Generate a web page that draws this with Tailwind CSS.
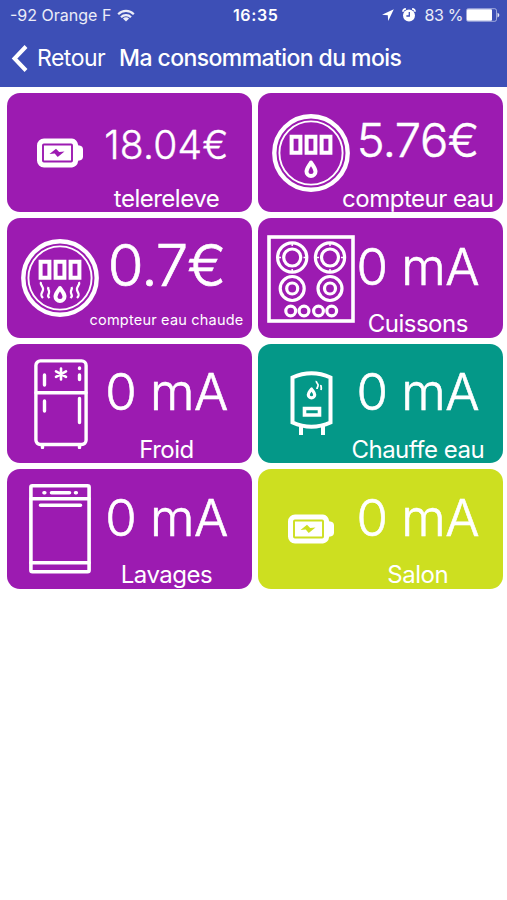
<!DOCTYPE html>
<html lang="fr">
<head>
  <meta charset="UTF-8">
  <meta name="viewport" content="width=device-width, initial-scale=1.0">
  <script src="https://cdn.jsdelivr.net/npm/@tailwindcss/browser@4"></script>
  <title>Ma consommation du mois</title>
</head>
<body class="bg-white text-white font-['Inter',sans-serif]">
  <header class="h-[87px] bg-[#3d4fb6]">
    <div class="flex h-[30px] items-center pl-[10px] pr-[7px] text-[16px] leading-none">
      <div class="flex w-[223px] items-center gap-[6px] text-white/90">
        <span class="whitespace-nowrap">-92 Orange F</span>
        <svg class="h-[13px] w-[18px]" viewBox="0 0 18 13" fill="none" stroke="currentColor" stroke-width="2.2">
          <path d="M1.2 5.2a11 11 0 0 1 15.6 0M4 8.2a7 7 0 0 1 10 0"/>
          <path d="M9 12.6L5.9 9.6a4.4 4.4 0 0 1 6.2 0z" fill="currentColor" stroke="none"/>
        </svg>
      </div>
      <span class="font-semibold tracking-[0.6px]">16:35</span>
      <div class="ml-auto flex items-center">
        <svg class="mr-[8px] h-[12px] w-[12px]" viewBox="0 0 12 12" fill="currentColor"><path d="M11.8 0.2L0 5.8l5.8 0.5 0.4 5.7z"/></svg>
        <svg class="mr-[9px] h-[14px] w-[14px]" viewBox="0 0 14 14">
          <circle cx="7" cy="7.6" r="6" fill="currentColor"/>
          <path d="M0.9 3.7a3 3 0 0 1 3-2.8M13.1 3.7a3 3 0 0 0-3-2.8" fill="none" stroke="currentColor" stroke-width="1.6"/>
          <path d="M7.3 4v4H4.4" fill="none" stroke="#3d4fb6" stroke-width="1.3"/>
        </svg>
        <span class="mr-[3px] whitespace-nowrap tracking-[-0.4px] text-white/90">83 %</span>
        <svg class="h-[14px] w-[34px]" viewBox="0 0 34 14">
          <rect x="0.5" y="0.7" width="30" height="12.6" rx="1.8" fill="none" stroke="#fff" stroke-opacity=".5"/>
          <rect x="1" y="1.2" width="25" height="11.6" rx="1" fill="#fff"/>
          <path d="M31.5 4.8c2.4 0.8 2.4 3.8 0 4.6z" fill="#fff" fill-opacity=".85"/>
        </svg>
      </div>
    </div>
    <nav class="flex h-[56px] items-center pl-[11px] text-[23px] leading-none">
      <svg class="mr-[9px] h-[27px] w-[17px]" viewBox="0 0 17 27" fill="none" stroke="currentColor" stroke-width="4"><path d="M15 1.5L3.5 13.5 15 25.5"/></svg>
      <a href="#" class="w-[82px] whitespace-nowrap tracking-[-0.5px]">Retour</a>
      <h1 class="whitespace-nowrap font-medium tracking-[-0.58px]">Ma consommation du mois</h1>
    </nav>
  </header>

  <svg class="hidden">
    <symbol id="battery" viewBox="0 0 48 30">
      <path d="M8 0.5h28a6.5 6.5 0 0 1 6 6l0.5 1h1a4 4 0 0 1 3.500 4v7a4 4 0 0 1-3.500 4h-1l-0.500 1a6.500 6.500 0 0 1-6 6H8A7 7 0 0 1 1 22.500v-15A7 7 0 0 1 8 0.500z" fill="#fff"/>
      <rect x="7" y="6.500" width="29" height="17" rx="0.800" fill="none" stroke="currentColor" stroke-width="1.900"/>
      <path d="M13.500 16l6.500-5.200 3.200 3.200 5.300-0.600-6.800 5.600-3-3.600z" fill="currentColor"/>
    </symbol>
    <symbol id="meter" viewBox="0 0 78 78">
      <g fill="none" stroke="#fff">
        <circle cx="39" cy="39" r="36.700" stroke-width="4.400"/>
        <circle cx="39" cy="39" r="31.600" stroke-width="1.900"/>
        <path d="M19.600 22.700h8.800v16h-8.800zM34.600 22.700h8.800v16h-8.800zM49.600 22.700h8.800v16h-8.800z" stroke-width="4"/>
      </g>
    </symbol>
  </svg>

  <main class="grid grid-cols-2 gap-x-[6px] gap-y-[6px] pt-[6px] pr-[4px] pl-[6.500px]">
    <section class="flex h-[119.400px] items-center rounded-[13px] bg-[#9c1bb1] text-white">
      <div class="flex w-[107px] shrink-0 justify-center">
        <svg class="h-[30px] w-[48px] text-[#9c1bb1]"><use href="#battery"/></svg>
      </div>
      <div class="flex h-full w-[106px] flex-col items-center whitespace-nowrap font-light">
        <div class="flex h-[93px] shrink-0 items-center pt-[9px] text-[39px] leading-none tracking-[0.2px] [-webkit-text-stroke:0.4px_white]"><span>18.04€</span></div>
        <div class="text-[24px] leading-[25px] font-normal tracking-[-0.5px]"><span>telereleve</span></div>
      </div>
    </section>

    <section class="flex h-[119.400px] items-center rounded-[13px] bg-[#9c1bb1] text-white">
      <div class="flex w-[107px] shrink-0 justify-center">
        <svg class="h-[78px] w-[78px]" viewBox="0 0 78 78">
          <use href="#meter"/>
          <path d="M39 48.500c-2 3.300-4.500 6-4.500 9a4.500 4.500 0 0 0 9 0c0-3-2.500-5.700-4.500-9z" fill="none" stroke="#fff" stroke-width="4" stroke-linejoin="round"/>
        </svg>
      </div>
      <div class="flex h-full w-[106px] flex-col items-center whitespace-nowrap font-light">
        <div class="flex h-[93px] shrink-0 items-center text-[47px] leading-none tracking-[-0.5px] [-webkit-text-stroke:0.5px_white]"><span>5.76€</span></div>
        <div class="text-[24px] leading-[25px] font-normal tracking-[-0.5px]"><span>compteur eau</span></div>
      </div>
    </section>

    <section class="flex h-[119.400px] items-center rounded-[13px] bg-[#9c1bb1] text-white">
      <div class="flex w-[107px] shrink-0 justify-center">
        <svg class="h-[78px] w-[78px]" viewBox="0 0 78 78">
          <use href="#meter"/>
          <g fill="none" stroke="#fff">
            <path d="M39 49c-2 3.300-4.500 5.500-4.500 8.500a4.500 4.500 0 0 0 9 0c0-3-2.500-5.200-4.500-8.500z" stroke-width="4" stroke-linejoin="round"/>
            <path d="M20 43c-1.500 3 3 4.500 2 8s-3.500 4.500 0 8M27.500 48c-1.500 2.500 1.500 3 0.500 6s-1.500 3 0.500 5M50.500 48c1.500 2.500-1.500 3-0.500 6s1.500 3-0.500 5M58 43c1.500 3-3 4.500-2 8s3.500 4.500 0 8" stroke-width="2.300"/>
          </g>
        </svg>
      </div>
      <div class="flex h-full w-[106px] flex-col items-center whitespace-nowrap font-light">
        <div class="flex h-[93px] shrink-0 items-center text-[58px] leading-none tracking-[-1px] [-webkit-text-stroke:0.7px_white]"><span>0.7€</span></div>
        <div class="text-[14.500px] leading-[18px] font-normal tracking-[0.2px]"><span>compteur eau chaude</span></div>
      </div>
    </section>

    <section class="flex h-[119.400px] items-center rounded-[13px] bg-[#9c1bb1] text-white">
      <div class="flex w-[107px] shrink-0 justify-center pt-[1px]">
        <svg class="h-[88px] w-[88px]" viewBox="0 0 88 88" fill="none" stroke="#fff">
          <rect x="2" y="2" width="84" height="84" stroke-width="3.600"/>
          <g stroke-width="3.200">
            <circle cx="25.200" cy="22.500" r="14.600"/><circle cx="25.200" cy="22.500" r="8.500"/>
            <circle cx="63" cy="22.500" r="14.600"/><circle cx="63" cy="22.500" r="8.500"/>
            <circle cx="25.200" cy="53.500" r="12"/><circle cx="25.200" cy="53.500" r="5.500"/>
            <circle cx="63" cy="53.500" r="12"/><circle cx="63" cy="53.500" r="5.500"/>
            <circle cx="23.700" cy="76" r="4.900"/><circle cx="37" cy="76" r="4.900"/>
            <circle cx="51.500" cy="76" r="4.900"/><circle cx="64.700" cy="76" r="4.900"/>
          </g>
          <path d="M25.200 9v2M25.200 34v3M12 22.500h2M36.500 22.500h3M63 9v2M63 34v3M50 22.500h2M74 22.500h3" stroke-width="1.500"/>
        </svg>
      </div>
      <div class="flex h-full w-[106px] flex-col items-center whitespace-nowrap font-light">
        <div class="flex h-[93px] shrink-0 items-center pt-[3px] text-[51px] leading-none tracking-[-0.6px] [-webkit-text-stroke:0.6px_white]"><span>0 mA</span></div>
        <div class="text-[24px] leading-[25px] font-normal tracking-[-0.5px]"><span>Cuissons</span></div>
      </div>
    </section>

    <section class="flex h-[119.400px] items-center rounded-[13px] bg-[#9c1bb1] text-white">
      <div class="flex w-[107px] shrink-0 justify-center pt-[1px] pl-[1px]">
        <svg class="h-[90px] w-[54px]" viewBox="0 0 54 90" fill="none" stroke="#fff" stroke-width="3.400" stroke-linecap="round">
          <rect x="1.900" y="1.900" width="50.200" height="83.600" rx="4.500"/>
          <path d="M2 33.800h50M8.500 86v2.500M45.500 86v2.500M10.500 16v10M10.500 42v10M45.500 16v4.500M45.500 9v0.500M45.500 39.500v24"/>
          <path d="M27 9.500v11M22 12.300l10 5.600M32 12.300l-10 5.600" stroke-width="2.600"/>
        </svg>
      </div>
      <div class="flex h-full w-[106px] flex-col items-center whitespace-nowrap font-light">
        <div class="flex h-[93px] shrink-0 items-center pt-[3px] text-[51px] leading-none tracking-[-0.6px] [-webkit-text-stroke:0.6px_white]"><span>0 mA</span></div>
        <div class="text-[24px] leading-[25px] font-normal tracking-[-0.5px]"><span>Froid</span></div>
      </div>
    </section>

    <section class="flex h-[119.400px] items-center rounded-[13px] bg-[#049888] text-white">
      <div class="flex w-[107px] shrink-0 justify-center pt-[1px] pl-[1px]">
        <svg class="h-[65px] w-[43px]" viewBox="0 0 43 65" fill="none" stroke="#fff">
          <path d="M2.500 6.500Q21.500-2 40.500 6.500V51.500Q21.500 60 2.500 51.500z" stroke-width="4"/>
          <path d="M11 55v9M33 55v9" stroke-width="4"/>
          <path d="M14.500 37.500h15v6.500h-15z" stroke-width="3.600"/>
          <path d="M21.500 18c-1.200 2-3.200 3.700-3.200 5.700a3.200 3.200 0 0 0 6.400 0c0-2-2-3.700-3.200-5.700z" stroke-width="3.200" stroke-linejoin="round"/>
          <path d="M26.500 10c-1 2 2.500 2.500 1.500 5s-1 2-1 3M31 14c-0.500 1.500 1 2 0 5" stroke-width="1.800"/>
        </svg>
      </div>
      <div class="flex h-full w-[106px] flex-col items-center whitespace-nowrap font-light">
        <div class="flex h-[93px] shrink-0 items-center pt-[3px] text-[51px] leading-none tracking-[-0.6px] [-webkit-text-stroke:0.6px_white]"><span>0 mA</span></div>
        <div class="text-[24px] leading-[25px] font-normal tracking-[-0.5px]"><span>Chauffe eau</span></div>
      </div>
    </section>

    <section class="flex h-[119.400px] items-center rounded-[13px] bg-[#9c1bb1] text-white">
      <div class="flex w-[107px] shrink-0 justify-center">
        <svg class="h-[90px] w-[62px]" viewBox="0 0 62 90" fill="none" stroke="#fff" stroke-width="3.600" stroke-linecap="round">
          <rect x="1.900" y="1.800" width="58.200" height="86" rx="1.500"/>
          <path d="M2 14.800h58M2 78.700h58M11.500 21.300h40M22.500 8.700h18M15 8.700h0.800M46.500 8.700h0.800"/>
        </svg>
      </div>
      <div class="flex h-full w-[106px] flex-col items-center whitespace-nowrap font-light">
        <div class="flex h-[93px] shrink-0 items-center pt-[3px] text-[51px] leading-none tracking-[-0.6px] [-webkit-text-stroke:0.6px_white]"><span>0 mA</span></div>
        <div class="text-[24px] leading-[25px] font-normal tracking-[-0.5px]"><span>Lavages</span></div>
      </div>
    </section>

    <section class="flex h-[119.400px] items-center rounded-[13px] bg-[#cddf20] text-white">
      <div class="flex w-[107px] shrink-0 justify-center">
        <svg class="h-[30px] w-[48px] text-[#cddf20]"><use href="#battery"/></svg>
      </div>
      <div class="flex h-full w-[106px] flex-col items-center whitespace-nowrap font-light">
        <div class="flex h-[93px] shrink-0 items-center pt-[3px] text-[51px] leading-none tracking-[-0.6px] [-webkit-text-stroke:0.6px_white]"><span>0 mA</span></div>
        <div class="text-[24px] leading-[25px] font-normal tracking-[-0.5px]"><span>Salon</span></div>
      </div>
    </section>
  </main>
</body>
</html>
